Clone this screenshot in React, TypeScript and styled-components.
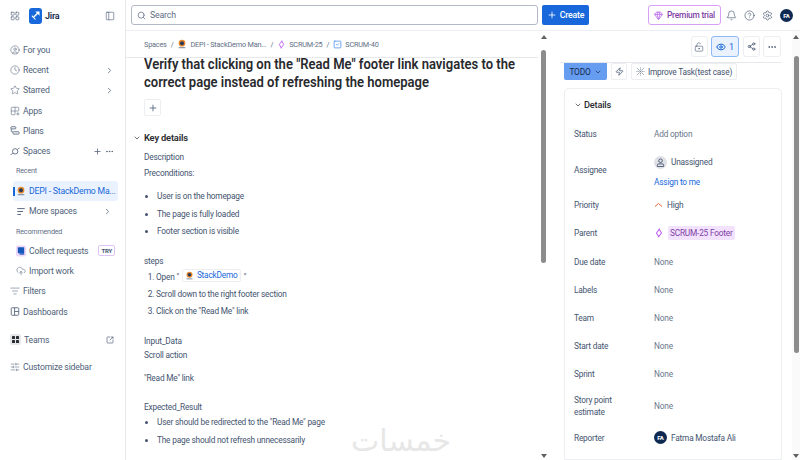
import React from "react";
import styled, { createGlobalStyle } from "styled-components";
import {
  Bell,
  ChevronDown,
  ChevronRight,
  CircleHelp,
  CircleUser,
  Clock,
  CloudUpload,
  Ellipsis,
  Eye,
  Gem,
  Grid2x2Plus,
  LayoutGrid,
  ListFilter,
  LockKeyholeOpen,
  PanelLeft,
  Plus,
  Search,
  Settings,
  Share2,
  SlidersHorizontal,
  SquareArrowOutUpRight,
  SquareCheck,
  Star,
  Zap,
} from "lucide-react";

const GlobalStyle = createGlobalStyle`
  html, body {
    margin: 0;
    padding: 0;
    background: #fff;
  }
  body {
    font-family: Roboto, "Liberation Sans", sans-serif;
    letter-spacing: -0.2px;
    color: #44546f;
  }
  * { box-sizing: border-box; }
  ul, ol { margin: 0; padding: 0; }
`;

const Page = styled.div`
  width: 800px;
  height: 460px;
  display: flex;
  overflow: hidden;
  position: relative;
`;

const Sidebar = styled.aside`
  width: 126px;
  flex: none;
  padding: 0 5px 0 5px;
  border-right: 1px solid #e6e8ec;
  display: flex;
  flex-direction: column;
`;

const Brand = styled.div`
  height: 31px;
  display: flex;
  align-items: center;
  padding: 0 5px;
  color: #505f79;
`;

const BrandName = styled.span`
  font-size: 9px;
  font-weight: 600;
  color: #172b4d;
  margin-left: 3px;
  flex: 1;
`;

const JiraLogo = styled.span`
  width: 13px;
  height: 16px;
  margin-left: 9px;
  border-radius: 3px;
  background: #1868db;
  display: flex;
  align-items: center;
  justify-content: center;
`;

const NavList = styled.nav`
  padding-top: 9px;
  display: flex;
  flex-direction: column;
`;

const NavRow = styled.div<{ $indent?: boolean; $active?: boolean; $top?: number }>`
  height: 20.2px;
  flex: none;
  display: flex;
  align-items: center;
  gap: 3px;
  margin-top: ${(p) => p.$top ?? 0}px;
  margin-left: ${(p) => (p.$indent ? 8 : 0)}px;
  margin-right: ${(p) => (p.$indent ? 2 : 0)}px;
  padding: 0 6px 0 ${(p) => (p.$indent ? 3 : 5)}px;
  font-size: 8.7px;
  white-space: nowrap;
  color: ${(p) => (p.$active ? "#1868db" : "#505f79")};
  background: ${(p) => (p.$active ? "#e9f2fe" : "transparent")};
  border-radius: 3px;
  position: relative;
  svg { flex: none; }
`;

const ActiveMark = styled.span`
  position: absolute;
  left: 0;
  top: 6px;
  width: 1.5px;
  height: 9px;
  background: #1868db;
`;

const NavLabel = styled.span`
  flex: 1;
  min-width: 0;
`;

const NavHeading = styled.div`
  height: 19.7px;
  display: flex;
  align-items: center;
  padding-left: 11px;
  font-size: 7.2px;
  font-weight: 400;
  color: #626f86;
`;

const TryBadge = styled.span`
  font-size: 6px;
  font-weight: 700;
  color: #44546f;
  border: 1px solid #dfc4f8;
  border-radius: 2px;
  padding: 1px 2px;
  margin-right: -3px;
  line-height: 7px;
`;

const TeamIcon = styled.span`
  width: 11px;
  height: 11px;
  border-radius: 2px;
  background: #e4e6ea;
  display: flex;
  align-items: center;
  justify-content: center;
`;

const Content = styled.div`
  flex: 1;
  min-width: 0;
  display: flex;
  flex-direction: column;
`;

const TopBar = styled.header`
  height: 31px;
  flex: none;
  display: flex;
  align-items: center;
  padding: 0 7px 0 5px;
  border-bottom: 1px solid #eceef1;
`;

const SearchBox = styled.div`
  width: 407px;
  height: 20px;
  border: 1px solid #b3b9c4;
  border-radius: 3px;
  display: flex;
  align-items: center;
  gap: 4px;
  padding-left: 5px;
  font-size: 8.8px;
  color: #626f86;
`;

const CreateButton = styled.div`
  margin-left: 4px;
  width: 47px;
  height: 20px;
  background: #1868db;
  color: #fff;
  border-radius: 2px;
  font-size: 8.8px;
  font-weight: 500;
  display: flex;
  align-items: center;
  justify-content: center;
  gap: 3px;
`;

const PremiumButton = styled.div`
  margin-left: auto;
  width: 73px;
  height: 20px;
  border: 1px solid #d8a0f7;
  border-radius: 3px;
  color: #803fa5;
  font-size: 8.4px;
  font-weight: 500;
  display: flex;
  align-items: center;
  justify-content: center;
  gap: 4px;
`;

const TopIcons = styled.div`
  display: flex;
  align-items: center;
  gap: 7px;
  margin-left: 5px;
  color: #44546f;
`;

const Avatar = styled.span<{ $size: number }>`
  width: ${(p) => p.$size}px;
  height: ${(p) => p.$size}px;
  flex: none;
  border-radius: 50%;
  background: #0f2a52;
  color: #fff;
  font-size: 6px;
  font-weight: 700;
  display: flex;
  align-items: center;
  justify-content: center;
`;

const Panels = styled.div`
  flex: 1;
  min-height: 0;
  display: flex;
`;

const Center = styled.main`
  width: 412px;
  flex: none;
  display: flex;
  flex-direction: column;
  overflow: hidden;
`;

const Crumbs = styled.div`
  height: 27px;
  flex: none;
  display: flex;
  align-items: center;
  gap: 3px;
  padding-left: 18px;
  font-size: 7.3px;
  color: #626f86;
  border-bottom: 1px solid #e6e8ec;
  svg { flex: none; }
`;

const Sep = styled.span`
  margin: 0 1px;
`;

const Body = styled.div`
  padding-left: 18px;
`;

const Title = styled.h1`
  margin: -2px 0 0;
  width: 440px;
  font-size: 14.4px;
  line-height: 18px;
  font-weight: 600;
  letter-spacing: 0;
  color: #292a2e;
  transform: scaleX(0.905);
  transform-origin: left top;
`;

const AddButton = styled.div`
  margin-top: 7px;
  width: 17px;
  height: 17px;
  border: 1px solid #eceef1;
  border-radius: 2px;
  display: flex;
  align-items: center;
  justify-content: center;
  color: #505f79;
`;

const SectionTitle = styled.div`
  margin: 16px 0 0 -11px;
  display: flex;
  align-items: center;
  gap: 3px;
  font-size: 9.4px;
  font-weight: 600;
  line-height: 12px;
  color: #292a2e;
`;

const Text = styled.div<{ $top: number }>`
  margin-top: ${(p) => p.$top}px;
  font-size: 8.3px;
  line-height: 11px;
  color: #44546f;
  display: flex;
  align-items: center;
`;

const Bullet = styled.li<{ $top: number }>`
  margin: ${(p) => p.$top}px 0 0 13px;
  font-size: 8.3px;
  line-height: 11px;
  color: #44546f;
`;

const Numbered = styled.li<{ $top: number }>`
  margin: ${(p) => p.$top}px 0 0 12px;
  font-size: 8.3px;
  line-height: 11px;
  color: #44546f;
`;

const SmartLink = styled.span`
  display: inline-flex;
  align-items: center;
  gap: 3px;
  margin: 0 3px;
  padding: 0 2px;
  border: 1px solid #eceef1;
  border-radius: 2px;
  color: #1868db;
`;

const Watermark = styled.div`
  position: absolute;
  left: 351px;
  top: 421px;
  width: 97px;
  font-family: "DejaVu Sans", sans-serif;
  font-size: 30px;
  line-height: 40px;
  letter-spacing: 0;
  color: #e7e7e7;
`;

const ScrollTrack = styled.div<{ $w: number; $tint?: boolean }>`
  width: ${(p) => p.$w}px;
  flex: none;
  display: flex;
  flex-direction: column;
  align-items: center;
  padding: 4px 0 2px;
  background: ${(p) => (p.$tint ? "#fafafa" : "transparent")};
`;

const Arrow = styled.span<{ $down?: boolean }>`
  flex: none;
  width: 0;
  height: 0;
  border-left: 3px solid transparent;
  border-right: 3px solid transparent;
  border-top: ${(p) => (p.$down ? "4px solid #606060" : "none")};
  border-bottom: ${(p) => (p.$down ? "none" : "4px solid #606060")};
`;

const Thumb = styled.span<{ $top: number; $h: number }>`
  margin-top: ${(p) => p.$top}px;
  height: ${(p) => p.$h}px;
  width: 5px;
  flex: none;
  border-radius: 2.5px;
  background: #8c8c8c;
`;

const Spacer = styled.span`
  flex: 1;
`;

const Side = styled.section`
  flex: 1;
  min-width: 0;
  padding-left: 11px;
  display: flex;
  flex-direction: column;
`;

const ActionBar = styled.div`
  height: 32px;
  flex: none;
  display: flex;
  justify-content: flex-end;
  align-items: center;
  gap: 3.5px;
  margin-right: 11px;
  border-bottom: 1px solid #e6e8ec;
`;

const ActionButton = styled.div<{ $on?: boolean; $w?: number }>`
  width: ${(p) => p.$w ?? 17}px;
  height: 21px;
  border: 1px solid ${(p) => (p.$on ? "#8fb8f6" : "#eceef1")};
  background: ${(p) => (p.$on ? "#e9f2fe" : "#fff")};
  color: ${(p) => (p.$on ? "#1868db" : "#44546f")};
  border-radius: 3px;
  font-size: 9px;
  display: flex;
  align-items: center;
  justify-content: center;
  gap: 3px;
`;

const StatusRow = styled.div`
  display: flex;
  gap: 4px;
  padding-left: 4px;
  height: 17px;
  flex: none;
`;

const TodoButton = styled.div`
  width: 43px;
  background: #669df1;
  color: #172b4d;
  border-radius: 0 0 2px 2px;
  font-size: 8.4px;
  display: flex;
  align-items: center;
  justify-content: center;
  gap: 3px;
`;

const GhostButton = styled.div<{ $w: number }>`
  width: ${(p) => p.$w}px;
  border: 1px solid #eceef1;
  border-radius: 2px;
  font-size: 8.3px;
  color: #44546f;
  white-space: nowrap;
  display: flex;
  align-items: center;
  justify-content: center;
  gap: 3px;
`;

const DetailsCard = styled.div`
  margin: 8px 10px 0 4px;
  flex: 1;
  border: 1px solid #eceef1;
  border-radius: 5px 5px 0 0;
  padding: 0 9px;
`;

const DetailsHead = styled.div`
  height: 31px;
  display: flex;
  align-items: center;
  gap: 2px;
  font-size: 9.2px;
  font-weight: 500;
  color: #292a2e;
`;

const Row = styled.div<{ $h?: number }>`
  min-height: ${(p) => p.$h ?? 28.2}px;
  display: grid;
  grid-template-columns: 80px 1fr;
  align-items: center;
  font-size: 8.3px;
  line-height: 12px;
`;

const RowLabel = styled.div`
  color: #44546f;
`;

const Muted = styled.div`
  color: #6b778c;
`;

const Value = styled.div`
  display: flex;
  align-items: center;
  gap: 4px;
  color: #44546f;
`;

const AssigneeStack = styled.div`
  display: flex;
  flex-direction: column;
  gap: 7px;
  margin-top: 4px;
`;

const BlueLink = styled.span`
  color: #1868db;
`;

const GreyAvatar = styled.span`
  width: 13px;
  height: 13px;
  border-radius: 50%;
  background: #dfe1e6;
  display: flex;
  align-items: center;
  justify-content: center;
  flex: none;
`;

const ParentTag = styled.span`
  background: #f3e2fd;
  color: #803fa5;
  border-radius: 2px;
  padding: 1px 2px;
`;

const ProjectIcon = ({ size }: { size: number }) => (
  <svg width={size} height={size} viewBox="0 0 12 12">
    <circle cx="6" cy="5" r="4" fill="#e8892e" />
    <circle cx="6" cy="5" r="2.4" fill="#2b3a55" />
    <rect x="2" y="10" width="8" height="1" fill="#5e6c84" />
  </svg>
);

const Diamond = ({ size }: { size: number }) => (
  <svg width={size} height={size} viewBox="0 0 12 12" fill="none" stroke="#bf63f3" strokeWidth="1.3">
    <path d="M6.8 1 3 6l3 5M5.2 11 9 6 6 1" />
  </svg>
);

const PlansIcon = () => (
  <svg width="10" height="11" viewBox="0 0 12 12" fill="none" stroke="#505f79" strokeWidth="1">
    <rect x="1" y="1.5" width="6" height="2.6" rx="1" />
    <rect x="3.5" y="7.5" width="7.5" height="2.8" rx="1" />
    <path d="M1.5 4v2.5a1 1 0 0 0 1 1h1" />
  </svg>
);

const SpacesIcon = () => (
  <svg width="10" height="11" viewBox="0 0 12 12" fill="none" stroke="#505f79" strokeWidth="1">
    <circle cx="6.2" cy="5.8" r="3.2" />
    <path d="M3.5 8c-1.6 1.4-2.6 2-2.6 1.6M9 3.500c1.400-1.300 2.300-1.900 2.300-1.500" />
  </svg>
);

const MoreSpacesIcon = () => (
  <svg width="10" height="11" viewBox="0 0 12 12" fill="none" stroke="#505f79" strokeWidth="1.1">
    <path d="M1.500 2.500h9M1.500 6h7M1.500 9.500h4.500" />
  </svg>
);

const CollectIcon = () => (
  <svg width="10" height="12" viewBox="0 0 11 12">
    <rect width="11" height="12" rx="2" fill="#eed7fc" />
    <rect x="2" y="2" width="7" height="6.500" rx="0.5" fill="#1558bc" />
    <rect x="4" y="8.500" width="5" height="1.500" fill="#1558bc" />
  </svg>
);

const DashboardIcon = () => (
  <svg width="10" height="11" viewBox="0 0 12 12" fill="none" stroke="#505f79" strokeWidth="1">
    <rect x="1.500" y="1.500" width="9" height="9" rx="1" />
    <path d="M5.500 1.500v9M5.500 6h5" />
  </svg>
);

const TeamGlyph = () => (
  <svg width="7" height="7" viewBox="0 0 7 7" fill="#292a2e">
    <rect width="3" height="3" rx="0.6" />
    <rect x="4" width="3" height="3" rx="0.6" />
    <rect y="4" width="3" height="3" rx="0.6" />
    <rect x="4" y="4" width="3" height="3" rx="0.6" />
  </svg>
);

const JiraMark = () => (
  <svg width="9" height="9" viewBox="0 0 10 10" fill="#fff">
    <path d="M4.800 0.500h4.700v4.700L7.600 3.400 3.600 7.200 2.500 6l4-3.800z" />
    <path d="M1 4.500l4.500 4.800-1.100 0.500L1 6.200z" />
  </svg>
);

const PersonIcon = () => (
  <svg width="9" height="9" viewBox="0 0 10 10" fill="none" stroke="#44546f" strokeWidth="1">
    <circle cx="5" cy="3" r="2" />
    <path d="M1.500 9.500V8a1.500 1.500 0 0 1 1.500-1.500h4A1.500 1.500 0 0 1 8.500 8v1.500z" />
  </svg>
);

const SparkIcon = () => (
  <svg width="9" height="9" viewBox="0 0 10 10" fill="none" stroke="#8590a2" strokeWidth="1" strokeDasharray="1.200 0.800">
    <path d="M1 1l8 8M9 1L1 9M5 0.500v9M0.500 5h9" />
  </svg>
);

const PriorityIcon = () => (
  <svg width="9" height="6" viewBox="0 0 9 6" fill="none" stroke="#e2683c" strokeWidth="1">
    <path d="M1 4.500 4.500 1.500 8 4.500" />
  </svg>
);

const App = () => (
  <>
    <GlobalStyle />
    <Page>
      <Sidebar>
        <Brand>
          <LayoutGrid size={10} strokeWidth={1.5} />
          <JiraLogo>
            <JiraMark />
          </JiraLogo>
          <BrandName>Jira</BrandName>
          <PanelLeft size={10} strokeWidth={1.5} />
        </Brand>
        <NavList>
          <NavRow><CircleUser size={10} strokeWidth={1.3} /><NavLabel>For you</NavLabel></NavRow>
          <NavRow><Clock size={10} strokeWidth={1.3} /><NavLabel>Recent</NavLabel><ChevronRight size={9} /></NavRow>
          <NavRow><Star size={10} strokeWidth={1.3} /><NavLabel>Starred</NavLabel><ChevronRight size={9} /></NavRow>
          <NavRow><Grid2x2Plus size={10} strokeWidth={1.3} /><NavLabel>Apps</NavLabel></NavRow>
          <NavRow><PlansIcon /><NavLabel>Plans</NavLabel></NavRow>
          <NavRow><SpacesIcon /><NavLabel>Spaces</NavLabel><Plus size={9} /><Ellipsis size={9} /></NavRow>
          <NavHeading>Recent</NavHeading>
          <NavRow $indent $active>
            <ActiveMark />
            <ProjectIcon size={10} />
            <NavLabel>DEPI - StackDemo Ma...</NavLabel>
          </NavRow>
          <NavRow $indent><MoreSpacesIcon /><NavLabel>More spaces</NavLabel><ChevronRight size={9} /></NavRow>
          <NavHeading>Recommended</NavHeading>
          <NavRow $indent><CollectIcon /><NavLabel>Collect requests</NavLabel><TryBadge>TRY</TryBadge></NavRow>
          <NavRow $indent><CloudUpload size={10} strokeWidth={1.3} /><NavLabel>Import work</NavLabel></NavRow>
          <NavRow><ListFilter size={10} strokeWidth={1.3} /><NavLabel>Filters</NavLabel></NavRow>
          <NavRow><DashboardIcon /><NavLabel>Dashboards</NavLabel></NavRow>
          <NavRow $top={8}><TeamIcon><TeamGlyph /></TeamIcon><NavLabel>Teams</NavLabel><SquareArrowOutUpRight size={8} /></NavRow>
          <NavRow $top={7}><SlidersHorizontal size={10} strokeWidth={1.3} /><NavLabel>Customize sidebar</NavLabel></NavRow>
        </NavList>
      </Sidebar>

      <Content>
        <TopBar>
          <SearchBox><Search size={9} />Search</SearchBox>
          <CreateButton><Plus size={10} />Create</CreateButton>
          <PremiumButton><Gem size={9} color="#b05ce6" />Premium trial</PremiumButton>
          <TopIcons>
            <Bell size={11} strokeWidth={1.4} />
            <CircleHelp size={11} strokeWidth={1.4} />
            <Settings size={11} strokeWidth={1.4} />
            <Avatar $size={13}>FA</Avatar>
          </TopIcons>
        </TopBar>

        <Panels>
          <Center>
            <Crumbs>
              Spaces <Sep>/</Sep>
              <ProjectIcon size={10} />
              DEPI - StackDemo Man... <Sep>/</Sep>
              <Diamond size={9} />
              SCRUM-25 <Sep>/</Sep>
              <SquareCheck size={9} color="#4688ec" />
              SCRUM-40
            </Crumbs>
            <Body>
              <Title>Verify that clicking on the "Read Me" footer link navigates to the<br />correct page instead of refreshing the homepage</Title>
              <AddButton><Plus size={10} /></AddButton>
              <SectionTitle><ChevronDown size={8} />Key details</SectionTitle>
              <Text $top={8}>Description</Text>
              <Text $top={5}>Preconditions:</Text>
              <ul>
                <Bullet $top={12}>User is on the homepage</Bullet>
                <Bullet $top={7}>The page is fully loaded</Bullet>
                <Bullet $top={6}>Footer section is visible</Bullet>
              </ul>
              <Text $top={19}>steps</Text>
              <ol>
                <Numbered $top={2}>
                  Open "<SmartLink><ProjectIcon size={9} />StackDemo</SmartLink>"
                </Numbered>
                <Numbered $top={6}>Scroll down to the right footer section</Numbered>
                <Numbered $top={6}>Click on the "Read Me" link</Numbered>
              </ol>
              <Text $top={19}>Input_Data</Text>
              <Text $top={3}>Scroll action</Text>
              <Text $top={12}>"Read Me" link</Text>
              <Text $top={18}>Expected_Result</Text>
              <ul>
                <Bullet $top={4}>User should be redirected to the "Read Me" page</Bullet>
                <Bullet $top={7}>The page should not refresh unnecessarily</Bullet>
              </ul>
            </Body>
          </Center>

          <ScrollTrack $w={11}>
            <Arrow />
            <Thumb $top={11} $h={213} />
            <Spacer />
            <Arrow $down />
          </ScrollTrack>

          <Side>
            <ActionBar>
              <ActionButton><LockKeyholeOpen size={10} strokeWidth={1.4} /></ActionButton>
              <ActionButton $on $w={28}><Eye size={10} strokeWidth={2.4} />1</ActionButton>
              <ActionButton><Share2 size={9} /></ActionButton>
              <ActionButton $w={18}><Ellipsis size={10} /></ActionButton>
            </ActionBar>
            <StatusRow>
              <TodoButton>TODO<ChevronDown size={8} /></TodoButton>
              <GhostButton $w={16}><Zap size={9} /></GhostButton>
              <GhostButton $w={106}><SparkIcon />Improve Task(test case)</GhostButton>
            </StatusRow>
            <DetailsCard>
              <DetailsHead><ChevronDown size={8} />Details</DetailsHead>
              <Row><RowLabel>Status</RowLabel><Muted>Add option</Muted></Row>
              <Row $h={43}>
                <RowLabel>Assignee</RowLabel>
                <AssigneeStack>
                  <Value><GreyAvatar><PersonIcon /></GreyAvatar>Unassigned</Value>
                  <BlueLink>Assign to me</BlueLink>
                </AssigneeStack>
              </Row>
              <Row><RowLabel>Priority</RowLabel><Value><PriorityIcon />High</Value></Row>
              <Row><RowLabel>Parent</RowLabel><Value><Diamond size={10} /><ParentTag>SCRUM-25 Footer</ParentTag></Value></Row>
              <Row><RowLabel>Due date</RowLabel><Muted>None</Muted></Row>
              <Row><RowLabel>Labels</RowLabel><Muted>None</Muted></Row>
              <Row><RowLabel>Team</RowLabel><Muted>None</Muted></Row>
              <Row><RowLabel>Start date</RowLabel><Muted>None</Muted></Row>
              <Row><RowLabel>Sprint</RowLabel><Muted>None</Muted></Row>
              <Row $h={35}><RowLabel>Story point<br />estimate</RowLabel><Muted>None</Muted></Row>
              <Row><RowLabel>Reporter</RowLabel><Value><Avatar $size={13}>FA</Avatar>Fatma Mostafa Ali</Value></Row>
            </DetailsCard>
          </Side>

          <ScrollTrack $w={8} $tint>
            <Arrow />
            <Thumb $top={17} $h={297} />
            <Spacer />
            <Arrow $down />
          </ScrollTrack>
        </Panels>
      </Content>
      <Watermark>خمسات</Watermark>
    </Page>
  </>
);

export default App;
